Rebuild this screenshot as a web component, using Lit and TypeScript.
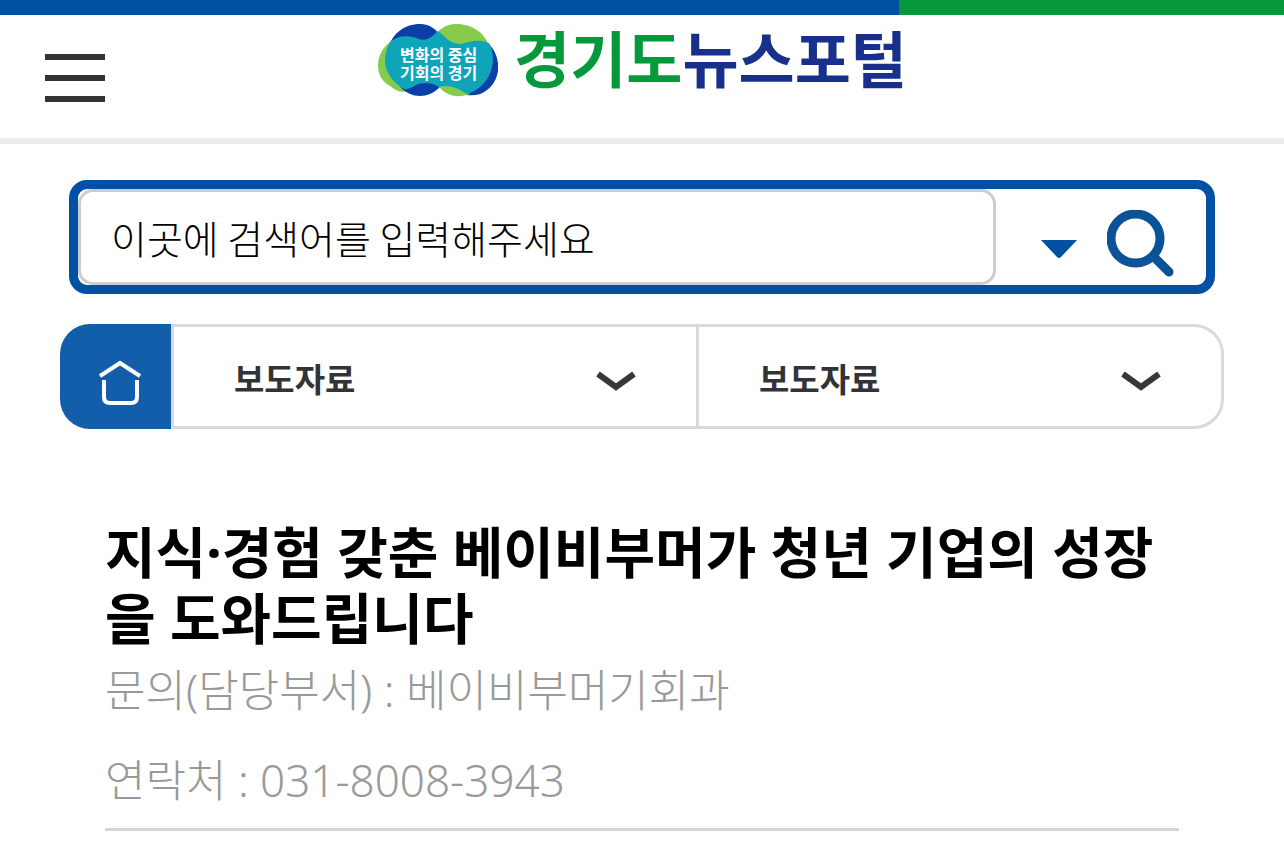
import { LitElement, html, css } from "lit";
import { customElement } from "lit/decorators.js";

@customElement("app-root")
export class AppRoot extends LitElement {
  static styles = css`
    :host {
      display: block;
      background: #fff;
      color: #000;
      font-family: "Noto Sans CJK KR", "Noto Sans", sans-serif;
    }
    * {
      box-sizing: border-box;
    }
    button {
      border: 0;
      padding: 0;
      background: none;
      font: inherit;
      color: inherit;
      cursor: pointer;
    }
    svg {
      display: block;
    }
    .stripe {
      height: 15px;
      background: linear-gradient(to right, #0050a4 70%, #05993b 70%);
    }
    .header {
      display: grid;
      grid-template-columns: 1fr auto 1fr;
      align-items: start;
      padding: 0 45px 33px;
      border-bottom: 6px solid #ececec;
    }
    .menu {
      width: 60px;
      margin-top: 39px;
    }
    .logo {
      display: flex;
      align-items: center;
      gap: 16px;
      height: 90px;
      color: #182f8c;
      text-decoration: none;
      font-size: 61px;
      font-weight: 700;
      line-height: 84px;
      white-space: nowrap;
    }
    .name {
      padding-bottom: 6px;
    }
    .region {
      color: #05993b;
    }
    .emblem text {
      font-size: 16px;
      font-weight: 700;
      fill: #fff;
    }
    .tools {
      display: grid;
      gap: 30px;
      padding: 36px 60px 0;
    }
    .search {
      display: flex;
      align-items: center;
      margin: 0 9px;
      border: 9px solid #0050a4;
      border-radius: 18px;
    }
    .query {
      flex: 1;
      min-width: 0;
      height: 96px;
      padding: 0 30px;
      border: 3px solid #cdcdcd;
      border-radius: 15px;
      background: #fff;
      font-family: inherit;
      font-size: 39px;
      font-weight: 300;
      color: #000;
    }
    .query::placeholder {
      color: #000;
      opacity: 1;
    }
    .options {
      margin: 24px 30px 0 45px;
    }
    .submit {
      margin: 12px 32px 0 0;
    }
    .crumbs {
      display: flex;
      height: 105px;
    }
    .home {
      display: flex;
      align-items: center;
      justify-content: center;
      width: 111px;
      padding: 12px 0 0 9px;
      border-radius: 30px 0 0 30px;
      background: #135eab;
    }
    .levels {
      display: flex;
      flex: 1;
      border: 3px solid #dadada;
      border-radius: 0 30px 30px 0;
    }
    .level {
      display: flex;
      flex: 1;
      align-items: center;
      justify-content: space-between;
      padding: 2px 60px 0;
      font-size: 33px;
      font-weight: 700;
      color: #323337;
    }
    .level + .level {
      border-left: 3px solid #dadada;
    }
    .level svg {
      margin-top: 7px;
    }
    .article {
      margin: 0 105px;
      padding: 90px 0 9px;
      border-bottom: 3px solid #d6d6d6;
      font-family: "Noto Sans", "Noto Sans CJK KR", sans-serif;
    }
    .title {
      margin: 0;
      font-size: 55px;
      font-weight: 700;
      line-height: 66px;
    }
    .contact {
      display: grid;
      gap: 12px;
      font-size: 44px;
      font-weight: 300;
      line-height: 78px;
      color: #999;
    }
    .contact p {
      margin: 0;
    }
  `;

  private chevron() {
    return html`<svg width="40" height="20" viewBox="0 0 40 20" aria-hidden="true">
      <path d="M2 3 20 16 38 3" fill="none" stroke="#383838" stroke-width="6" />
    </svg>`;
  }

  render() {
    return html`
      <div class="stripe"></div>
      <header class="header">
        <button class="menu" type="button" aria-label="전체 메뉴">
          <svg width="60" height="48" viewBox="0 0 60 48" aria-hidden="true">
            <path d="M0 3H60M0 24H60M0 45H60" stroke="#333" stroke-width="6" />
          </svg>
        </button>
        <a class="logo" href="#">
          <svg class="emblem" width="121" height="74" viewBox="-1 -1 121 74" aria-hidden="true">
            <path d="M78 0C95 0 109 10 112 26L70 36 55 14C61 5 68 0 78 0Z" fill="#86cb4c" />
            <path d="M111 20C125 35 122 57 109 66 103 71 96 72 88 71L98 32Z" fill="#0a3fa8" />
            <path d="M42 0C27 0 15 9 11 22L42 38 64 14C58 5 52 0 42 0Z" fill="#0a3fa8" />
            <path d="M12 18C-4 30-4 54 12 62 18 67 23 69 30 67L24 28Z" fill="#86cb4c" />
            <path d="M22 63C34 75 50 75 62 63L46 54Z" fill="#0a3fa8" />
            <path d="M61 63C70 73 81 74 92 70L74 55Z" fill="#86cb4c" />
            <path
              d="M12 18C20 11 32 11 41 15 49 18 55 12 60 7 67 12 71 20 83 20 93 17 102 15 111 19 121 38 111 64 89 70 81 65 72 60 61 63 54 58 44 58 38 61 34 63 30 66 26 65 7 54 2 36 12 18Z"
              fill="#0fa5b8"
            />
            <text>
              <tspan x="22" y="37">변화의 중심</tspan>
              <tspan x="22" y="55">기회의 경기</tspan>
            </text>
          </svg>
          <span class="name"><span class="region">경기도</span>뉴스포털</span>
        </a>
      </header>

      <div class="tools">
        <form class="search" role="search" @submit=${(e: Event) => e.preventDefault()}>
          <input class="query" type="text" aria-label="검색어" placeholder="이곳에 검색어를 입력해주세요" />
          <button class="options" type="button" aria-label="검색 옵션">
            <svg width="36" height="18" viewBox="0 0 36 18" aria-hidden="true">
              <path d="M0 0H36L20 17Q18 19 16 17Z" fill="#0050a4" />
            </svg>
          </button>
          <button class="submit" type="submit" aria-label="검색">
            <svg width="67" height="67" viewBox="0 0 67 67" aria-hidden="true">
              <circle cx="28.500" cy="28.500" r="24.500" fill="none" stroke="#0b5299" stroke-width="9" />
              <path d="m46 46 16 16" stroke="#0b5299" stroke-width="9" stroke-linecap="round" />
            </svg>
          </button>
        </form>

        <nav class="crumbs" aria-label="현재 위치">
          <a class="home" href="#" aria-label="홈">
            <svg width="42" height="45" viewBox="0 0 42 45" fill="none" stroke="#fff" aria-hidden="true">
              <path d="M1 16 21 3 41 16" stroke-width="4" />
              <path d="M5 20V37Q5 43 11 43H32Q38 43 38 37V20" stroke-width="4" />
            </svg>
          </a>
          <div class="levels">
            <button class="level" type="button" aria-haspopup="true">보도자료 ${this.chevron()}</button>
            <button class="level" type="button" aria-haspopup="true">보도자료 ${this.chevron()}</button>
          </div>
        </nav>
      </div>

      <main class="article">
        <h1 class="title">지식·경험 갖춘 베이비부머가 청년 기업의 성장을 도와드립니다</h1>
        <div class="contact">
          <p>문의(담당부서) : 베이비부머기회과</p>
          <p>연락처 : 031-8008-3943</p>
        </div>
      </main>
    `;
  }
}
